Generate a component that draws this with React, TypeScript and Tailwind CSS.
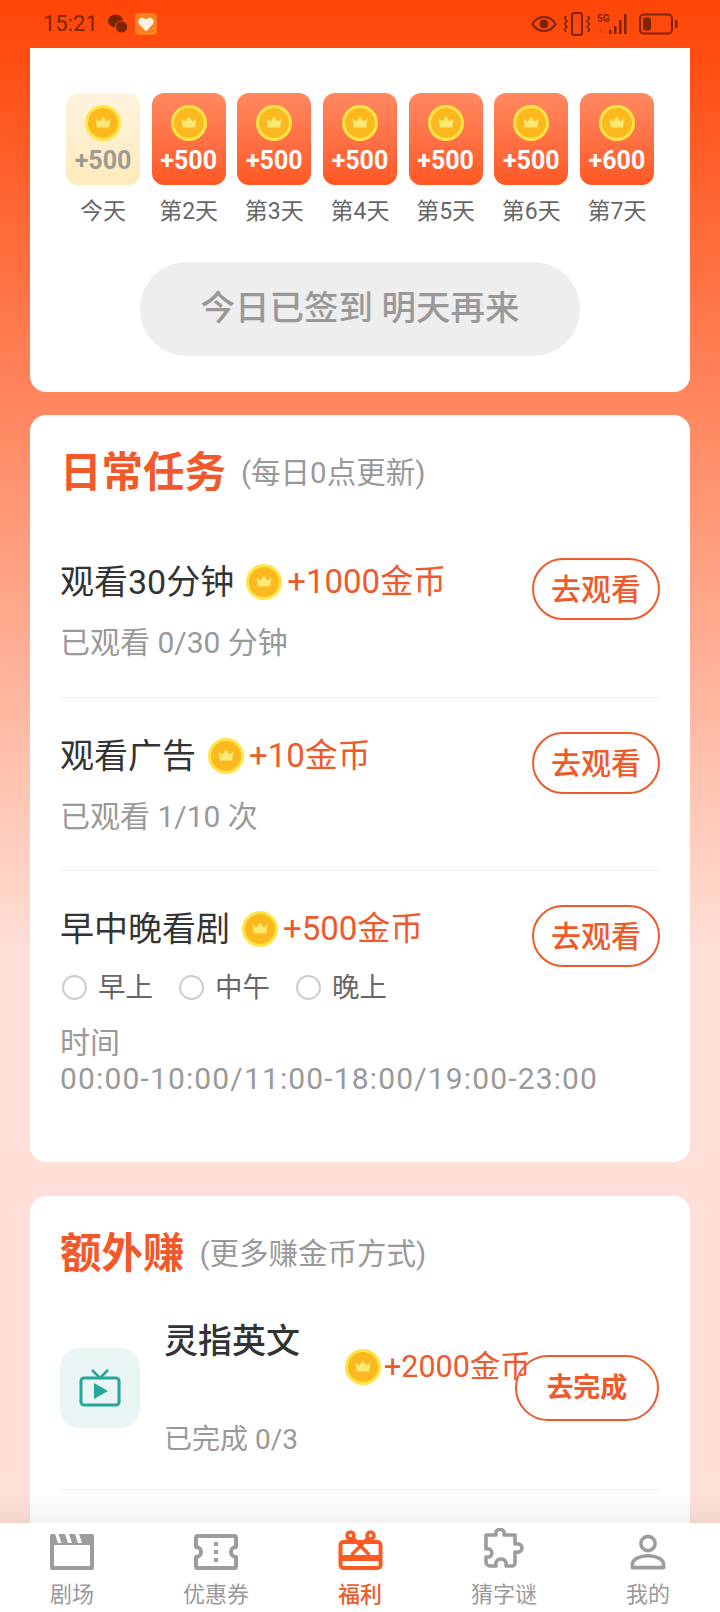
const days = [
  { label: "今天", coins: "+500", done: true },
  { label: "第2天", coins: "+500" },
  { label: "第3天", coins: "+500" },
  { label: "第4天", coins: "+500" },
  { label: "第5天", coins: "+500" },
  { label: "第6天", coins: "+500" },
  { label: "第7天", coins: "+600" },
];

const font = { fontFamily: '"Roboto", "Noto Sans CJK SC", sans-serif' };

function Coin({ size = 36 }: { size?: number }) {
  return (
    <svg width={size} height={size} viewBox="0 0 36 36" className="shrink-0">
      <circle cx="18" cy="18" r="18" fill="#fde547" />
      <circle cx="18" cy="18" r="15" fill="#fcb91f" />
      <path d="M28 8a15 15 0 0 1-19 22 15 15 0 0 0 19-22z" fill="#f9a81c" />
      <path d="M10.500 13.500l4 3L18 11.500l3.500 5 4-3-1.400 9H11.900z" fill="#fde874" />
    </svg>
  );
}

function GoButton({ label }: { label: string }) {
  return (
    <div className="flex h-[62px] w-[128px] shrink-0 items-center justify-center rounded-full border-2 border-[#ee5a2c] text-[30px] font-medium text-[#ee5a2c]">
      {label}
    </div>
  );
}

function Reward({ text }: { text: string }) {
  return (
    <div className="ml-[12px] flex items-center gap-[5px] text-[33px] whitespace-nowrap text-[#ee5a2c]">
      <Coin />
      <span>{text}</span>
    </div>
  );
}

function Radio({ label }: { label: string }) {
  return (
    <div className="flex items-center gap-[11px] text-[27.500px] text-[#666666]">
      <span className="h-[25px] w-[25px] rounded-full border-2 border-[#cccccc]" />
      <span>{label}</span>
    </div>
  );
}

function StatusBar() {
  return (
    <div className="flex h-[48px] shrink-0 items-center justify-between pl-[43px] pr-[41px] text-[#7d2503]">
      <div className="flex items-center">
        <span className="text-[22px] leading-none">15:21</span>
        <svg width="20" height="20" viewBox="0 0 20 20" fill="#7d2503" className="ml-[10px]">
          <ellipse cx="7.500" cy="7" rx="7.500" ry="6.500" />
          <circle cx="13.500" cy="13" r="6" stroke="#ff4507" strokeWidth="1" />
        </svg>
        <span className="ml-[7px] flex h-[22px] w-[22px] items-center justify-center rounded-[4px] bg-[#ff8020]">
          <svg width="16" height="15" viewBox="0 0 16 15" fill="#fff1e2">
            <path d="M8 14.500L1.200 7.200C-.8 4.600 1 .8 4.200.8 5.900.8 7.200 1.700 8 3c.8-1.300 2.100-2.200 3.800-2.200 3.200 0 5 3.800 3 6.400z" />
          </svg>
        </span>
      </div>
      <div className="flex items-center">
        <svg width="26" height="18" viewBox="0 0 26 18" fill="none">
          <path d="M1.500 9C4 4.500 8 2 13 2s9 2.500 11.500 7C22 13.500 18 16 13 16S4 13.500 1.500 9z" stroke="#7d2503" strokeWidth="2.200" />
          <circle cx="13" cy="9" r="4.500" fill="#7d2503" />
        </svg>
        <svg width="28" height="24" viewBox="0 0 28 24" fill="none" stroke="#7d2503" strokeWidth="2" className="ml-[6px]">
          <rect x="9" y="1" width="10" height="22" rx="2" />
          <path d="M3 4l-1.500 2.500L4 9l-2.500 3L4 15l-2.500 2.500L3 20M25 4l1.500 2.500L24 9l2.500 3L24 15l2.500 2.500L25 20" strokeWidth="1.600" />
        </svg>
        <svg width="33" height="22" viewBox="0 0 33 22" className="ml-[6px]">
          <text x="0" y="9" fontSize="10" fontWeight="700" fill="#7d2503" fontFamily="Roboto, sans-serif">5G</text>
          <text x="1" y="20" fontSize="8" fontWeight="700" fill="#c9481a" fontFamily="Roboto, sans-serif">1↓</text>
          <rect x="12" y="17" width="2.500" height="4" fill="#7d2503" />
          <rect x="17" y="13" width="2.500" height="8" fill="#7d2503" />
          <rect x="22" y="7" width="2.500" height="14" fill="#7d2503" />
          <rect x="27" y="1" width="2.500" height="20" fill="#7d2503" />
        </svg>
        <svg width="40" height="22" viewBox="0 0 40 22" fill="none" className="ml-[9px]">
          <rect x="1" y="1.500" width="32" height="19" rx="4" stroke="#7d2503" strokeWidth="2" />
          <rect x="4" y="4.500" width="8" height="13" rx="2" fill="#7d2503" />
          <rect x="36" y="7" width="2.500" height="8" rx="1" fill="#7d2503" />
        </svg>
      </div>
    </div>
  );
}

function SignInCard() {
  return (
    <div className="mx-[30px] flex h-[344px] shrink-0 flex-col items-center rounded-b-[16px] bg-white px-[36px] pt-[45px]">
      <div className="flex w-full justify-between">
        {days.map((day, i) => (
          <div key={i} className="flex w-[74px] flex-col items-center">
            <div
              className={`flex h-[92px] w-[74px] flex-col items-center rounded-[12px] pt-[12px] ${
                day.done
                  ? "bg-gradient-to-b from-[#fff3df] to-[#feeaba] text-[#9c9c94]"
                  : "bg-gradient-to-b from-[#ff8860] to-[#ff5722] text-white"
              }`}
            >
              <Coin />
              <span className="mt-[5px] text-[25px] leading-[30px] font-bold">{day.coins}</span>
            </div>
            <span className="mt-[7px] text-[23px] leading-[40px] whitespace-nowrap text-[#666666]">{day.label}</span>
          </div>
        ))}
      </div>
      <div className="mt-[30px] flex h-[94px] w-[440px] items-center justify-center rounded-full bg-[#eeeeee] text-[34.500px] font-medium whitespace-pre text-[#999999]">
        今日已签到 明天再来
      </div>
    </div>
  );
}

function DailyTasks() {
  return (
    <div className="mx-[30px] mt-[23px] h-[747px] shrink-0 rounded-[16px] bg-white px-[30px] pt-[30px]">
      <div className="flex items-center">
        <span className="text-[41.500px] leading-[56px] font-bold text-[#f2592a]">日常任务</span>
        <span className="ml-[15px] text-[29.500px] text-[#999999]">(每日0点更新)</span>
      </div>
      <div className="flex h-[197px] items-start justify-between border-b border-[#eeeeee] pt-[56px]">
        <div className="min-w-0 flex-1">
          <div className="flex items-center text-[34px] leading-[50px] text-[#333333]">
            <span>观看30分钟</span>
            <Reward text="+1000金币" />
          </div>
          <div className="mt-[16px] text-[30px] leading-[40px] text-[#999999]">已观看 0/30 分钟</div>
        </div>
        <div className="mt-[1px]"><GoButton label="去观看" /></div>
      </div>
      <div className="flex h-[173px] items-start justify-between border-b border-[#eeeeee] pt-[33px]">
        <div className="min-w-0 flex-1">
          <div className="flex items-center text-[34px] leading-[50px] text-[#333333]">
            <span>观看广告</span>
            <Reward text="+10金币" />
          </div>
          <div className="mt-[16px] text-[30px] leading-[40px] text-[#999999]">已观看 1/10 次</div>
        </div>
        <div className="mt-[1px]"><GoButton label="去观看" /></div>
      </div>
      <div className="flex items-start justify-between pt-[33px]">
        <div className="min-w-0 flex-1">
          <div className="flex items-center text-[34px] leading-[50px] text-[#333333]">
            <span>早中晚看剧</span>
            <Reward text="+500金币" />
          </div>
          <div className="mt-[13px] flex gap-[26px] pl-[2px]">
            <Radio label="早上" />
            <Radio label="中午" />
            <Radio label="晚上" />
          </div>
          <div className="mt-[17px] text-[30px] leading-[36px] whitespace-nowrap text-[#999999]">
            <div>时间</div>
            <div className="tracking-[1.150px]">00:00-10:00/11:00-18:00/19:00-23:00</div>
          </div>
        </div>
        <div className="mt-[1px]"><GoButton label="去观看" /></div>
      </div>
    </div>
  );
}

function ExtraTasks() {
  return (
    <div className="mx-[30px] mt-[34px] flex-1 rounded-t-[16px] bg-white px-[30px] pt-[30px]">
      <div className="flex items-center">
        <span className="text-[41.500px] leading-[56px] font-bold text-[#f2592a]">额外赚</span>
        <span className="ml-[15px] text-[29.500px] text-[#999999]">(更多赚金币方式)</span>
      </div>
      <div className="mt-[34px] flex h-[174px] items-start border-b border-[#eeeeee]">
        <div className="mt-[32px] flex h-[80px] w-[80px] shrink-0 items-center justify-center rounded-[20px] bg-[#e8f5f4]">
          <svg width="42" height="38" viewBox="0 0 42 38" fill="none">
            <path d="M13 1l8 8 8-8" stroke="#26a69a" strokeWidth="2.500" />
            <rect x="2" y="9" width="38" height="27" rx="3" stroke="#26a69a" strokeWidth="3" />
            <path d="M15 14l14 8-14 8z" fill="#26a69a" />
          </svg>
        </div>
        <div className="ml-[24px] w-[169px] shrink-0">
          <div className="text-[34px] leading-[50px] font-medium text-[#333333]">灵指英文</div>
          <div className="mt-[54px] text-[28px] leading-[40px] text-[#999999]">已完成 0/3</div>
        </div>
        <div className="mt-[28px] ml-[12px] flex items-center gap-[3px] text-[30.500px] whitespace-nowrap text-[#ee5a2c]">
          <Coin />
          <span>+2000金币</span>
        </div>
        <div className="relative mt-[39px] -ml-[16px] flex h-[66px] w-[144px] shrink-0 items-center justify-center rounded-full border-2 border-[#ee5a2c] text-[27px] font-bold text-[#ee5a2c]">
          去完成
        </div>
      </div>
    </div>
  );
}

function TabIcon({ name, color }: { name: string; color: string }) {
  const common = { fill: "none", stroke: color, strokeWidth: 4, strokeLinejoin: "round" as const, strokeLinecap: "round" as const };
  if (name === "clapper") {
    return (
      <svg width="44" height="36" viewBox="0 0 44 36">
        <path d="M2 0h40a2 2 0 0 1 2 2v32a2 2 0 0 1-2 2H2a2 2 0 0 1-2-2V2a2 2 0 0 1 2-2z" fill={color} />
        <path d="M4 11h36v21H4z" fill="#ffffff" />
        <path d="M5 0h3.500l3 9H8zM15 0h4l3 9h-4zM25 0h4l3 9h-4z" fill="#ffffff" />
      </svg>
    );
  }
  if (name === "ticket") {
    return (
      <svg width="44" height="36" viewBox="0 0 44 36" {...common}>
        <path d="M3.500 2h37a1.500 1.500 0 0 1 1.500 1.500V13a5 5 0 0 0 0 10v9.500a1.500 1.500 0 0 1-1.500 1.500h-37A1.500 1.500 0 0 1 2 32.500V23a5 5 0 0 0 0-10V3.500A1.500 1.500 0 0 1 3.500 2z" />
        <path d="M22 8v4M22 16v4M22 24v4" strokeLinecap="butt" />
      </svg>
    );
  }
  if (name === "gift") {
    return (
      <svg width="45" height="40" viewBox="0 0 44 40" {...common}>
        <rect x="2" y="12" width="40" height="26" rx="3" />
        <path d="M2 25h40v6H2z" fill={color} stroke="none" />
        <circle cx="12" cy="5.500" r="3.500" strokeWidth="3.500" />
        <circle cx="32" cy="5.500" r="3.500" strokeWidth="3.500" />
        <path d="M14.500 8L30 24M29.500 8L14 24" strokeWidth="3.500" />
      </svg>
    );
  }
  if (name === "puzzle") {
    return (
      <svg width="44" height="42" viewBox="0 0 44 42" {...common} strokeWidth={3.600}>
        <path d="M4 7h10c-1-5 2-5.500 4-5.500s5 1 4 5.500h11v9c5-1 7 1.500 7 4s-2 5-7 4v11a3 3 0 0 1-3 3h-6c1-5-2-7-5-7s-6 2-5 7H8c-2 0-4-2-4-4v-5c3 1 6-1 6-4s-3-5-6-4z" />
      </svg>
    );
  }
  return (
    <svg width="36" height="36" viewBox="0 0 38 38" {...common} strokeWidth={3.800}>
      <circle cx="19" cy="10" r="7.500" />
      <path d="M2.500 35.500v-3c0-6 8-9.500 16.500-9.500s16.500 3.500 16.500 9.500v3z" />
    </svg>
  );
}

const tabs = [
  { icon: "clapper", label: "剧场" },
  { icon: "ticket", label: "优惠券" },
  { icon: "gift", label: "福利", active: true },
  { icon: "puzzle", label: "猜字谜" },
  { icon: "person", label: "我的" },
];

function BottomNav() {
  return (
    <div className="relative grid h-[89px] shrink-0 grid-cols-5 bg-white">
      <div className="absolute inset-x-0 -top-[30px] h-[30px] bg-gradient-to-b from-transparent to-black/5" />
      {tabs.map((tab) => {
        const color = tab.active ? "#fb5a24" : "#9c9c9c";
        return (
          <div key={tab.label} className="flex flex-col items-center">
            <div className="flex h-[47px] items-end justify-center">
              <TabIcon name={tab.icon} color={color} />
            </div>
            <span
              className={`mt-[9px] text-[22px] leading-[32px] ${tab.active ? "font-medium text-[#ee5a2c]" : "text-[#999999]"}`}
            >
              {tab.label}
            </span>
          </div>
        );
      })}
    </div>
  );
}

export default function App() {
  return (
    <div
      className="flex h-[1612px] w-[720px] flex-col overflow-hidden bg-[linear-gradient(180deg,#ff4507_0px,#ffdfd6_950px,#ffe0d9_1612px)]"
      style={font}
    >
      <StatusBar />
      <div className="flex min-h-0 flex-1 flex-col overflow-hidden">
        <SignInCard />
        <DailyTasks />
        <ExtraTasks />
      </div>
      <BottomNav />
    </div>
  );
}
